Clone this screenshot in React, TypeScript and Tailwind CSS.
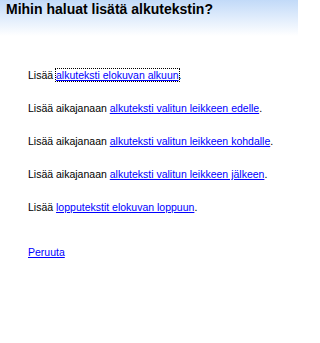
import React from "react";

const lines: { pre: string; link: string; focus?: boolean }[] = [
  { pre: "Lisää ", link: "alkuteksti elokuvan alkuun", focus: true },
  { pre: "Lisää aikajanaan ", link: "alkuteksti valitun leikkeen edelle" },
  { pre: "Lisää aikajanaan ", link: "alkuteksti valitun leikkeen kohdalle" },
  { pre: "Lisää aikajanaan ", link: "alkuteksti valitun leikkeen jälkeen" },
  { pre: "Lisää ", link: "lopputekstit elokuvan loppuun" },
];

export default function App() {
  return (
    <div
      className="w-[298px] h-[343px] bg-white overflow-hidden"
      style={{ fontFamily: '"Liberation Sans", Arial, sans-serif' }}
    >
      <div className="h-[36px] bg-gradient-to-b from-[#c2daf8] to-white pl-[6px]">
        <div className="text-[14px] leading-[18px] font-bold text-black">
          Mihin haluat lisätä alkutekstin?
        </div>
      </div>
      <div className="pl-[28px] pt-[32px] text-[10.5px] text-black flex flex-col">
        {lines.map((l, i) => (
          <div key={i} className="h-[33px] leading-[14px]">
            {l.pre}
            <a
              href="#"
              className={
                "text-[#0000ff] underline " +
                (l.focus ? "outline outline-1 outline-dotted outline-black" : "")
              }
            >
              {l.link}
            </a>
            .
          </div>
        ))}
        <div className="mt-[12px] leading-[14px]">
          <a href="#" className="text-[#0000ff] underline">
            Peruuta
          </a>
        </div>
      </div>
    </div>
  );
}
